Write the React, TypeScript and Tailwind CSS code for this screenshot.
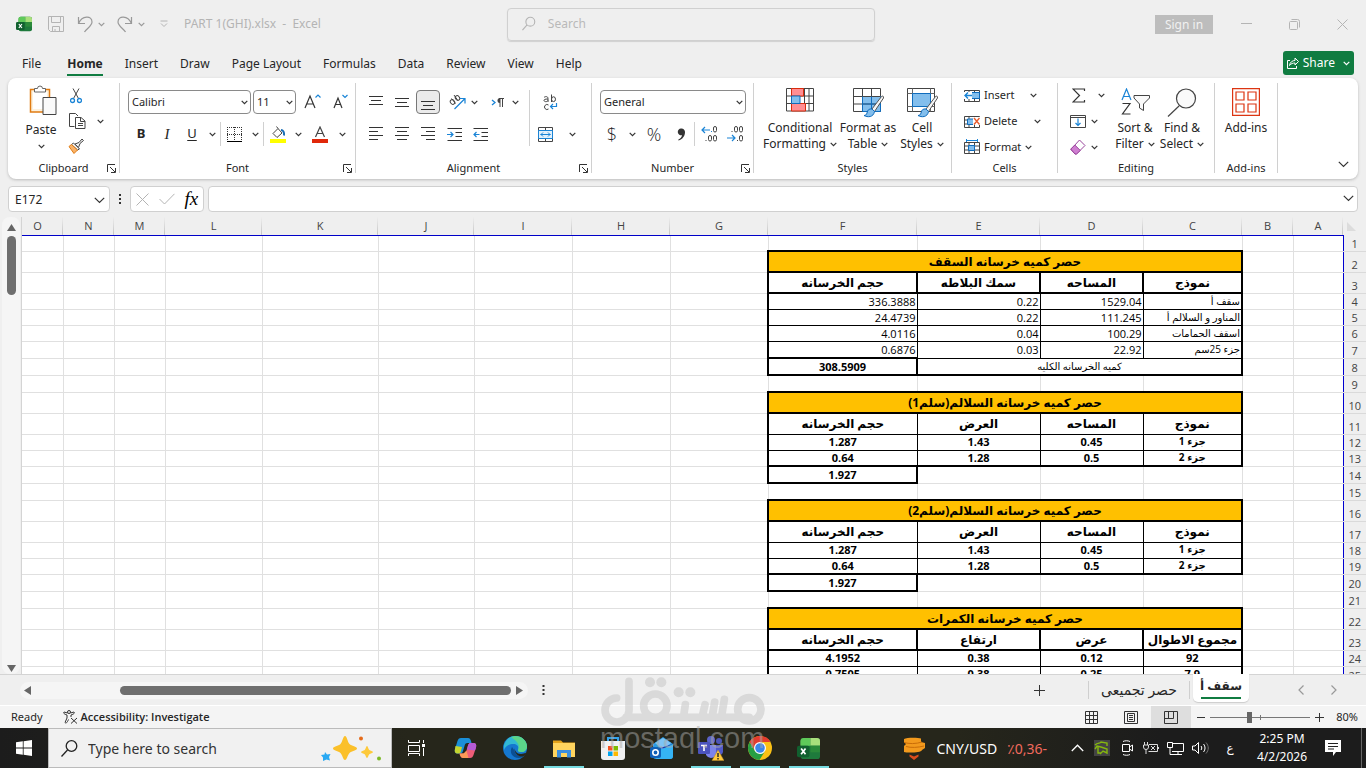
import React from 'react';

const COLUMNS = [
    { name: 'O', width: 'w-[51px]' },
    { name: 'N', width: 'w-[51px]' },
    { name: 'M', width: 'w-[51px]' },
    { name: 'L', width: 'w-[97px]' },
    { name: 'K', width: 'w-[116px]' },
    { name: 'J', width: 'w-[96px]' },
    { name: 'I', width: 'w-[98px]' },
    { name: 'H', width: 'w-[98px]' },
    { name: 'G', width: 'w-[98px]' },
    { name: 'F', width: 'w-[149px]' },
    { name: 'E', width: 'w-[123px]' },
    { name: 'D', width: 'w-[103px]' },
    { name: 'C', width: 'w-[99px]' },
    { name: 'B', width: 'w-[51px]' },
    { name: 'A', width: 'w-[50px]' },
];

type RowKind = 'blank' | 'title' | 'headHeavy' | 'head' | 'numbers' | 'grand' | 'body' | 'bodyLast' | 'total';

interface SheetRow {
    kind: RowKind;
    height: string;
    // values run from column F to column C
    values?: string[];
}

const TALL = 'h-[21px]';
const MID = 'h-[17px]';
const LOW = 'h-[16px]';

const ROWS: SheetRow[] = [
    { kind: 'blank', height: LOW },
    { kind: 'title', height: TALL, values: ['حصر كميه خرسانه السقف'] },
    { kind: 'headHeavy', height: TALL, values: ['حجم الخرسانه', 'سمك البلاطه', 'المساحه', 'نموذج'] },
    { kind: 'numbers', height: LOW, values: ['336.3888', '0.22', '1529.04', 'سقف أ'] },
    { kind: 'numbers', height: LOW, values: ['24.4739', '0.22', '111.245', 'المناور و السلالم أ'] },
    { kind: 'numbers', height: LOW, values: ['4.0116', '0.04', '100.29', 'اسقف الحمامات'] },
    { kind: 'numbers', height: MID, values: ['0.6876', '0.03', '22.92', 'جزء 25سم'] },
    { kind: 'grand', height: MID, values: ['308.5909', 'كميه الخرسانه الكليه'] },
    { kind: 'blank', height: MID },
    { kind: 'title', height: TALL, values: ['حصر كميه خرسانه السلالم(سلم1)'] },
    { kind: 'head', height: TALL, values: ['حجم الخرسانه', 'العرض', 'المساحه', 'نموذج'] },
    { kind: 'body', height: LOW, values: ['1.287', '1.43', '0.45', 'جزء 1'] },
    { kind: 'bodyLast', height: LOW, values: ['0.64', '1.28', '0.5', 'جزء 2'] },
    { kind: 'total', height: MID, values: ['1.927'] },
    { kind: 'blank', height: MID },
    { kind: 'title', height: TALL, values: ['حصر كميه خرسانه السلالم(سلم2)'] },
    { kind: 'head', height: TALL, values: ['حجم الخرسانه', 'العرض', 'المساحه', 'نموذج'] },
    { kind: 'body', height: LOW, values: ['1.287', '1.43', '0.45', 'جزء 1'] },
    { kind: 'bodyLast', height: LOW, values: ['0.64', '1.28', '0.5', 'جزء 2'] },
    { kind: 'total', height: MID, values: ['1.927'] },
    { kind: 'blank', height: MID },
    { kind: 'title', height: TALL, values: ['حصر كميه خرسانه الكمرات'] },
    { kind: 'headHeavy', height: TALL, values: ['حجم الخرسانه', 'ارتفاع', 'عرض', 'مجموع الاطوال'] },
    { kind: 'body', height: LOW, values: ['4.1952', '0.38', '0.12', '92'] },
    { kind: 'body', height: MID, values: ['0.7505', '0.38', '0.25', '7.9'] },
];

const CELL_STYLE: Record<RowKind, string> = {
    blank: '',
    title: 'border-2 border-black bg-[#ffc000] text-center text-[12px] leading-[17px] font-bold',
    headHeavy: 'border-2 border-black text-center text-[12px] leading-[17px] font-bold',
    head: 'border border-black text-center text-[12px] leading-[17px] font-bold',
    numbers: 'border border-black px-px text-right leading-[13px]',
    grand: 'border border-b-2 border-black text-center leading-[13px]',
    body: 'border border-black text-center align-top leading-[13px] font-bold',
    bodyLast: 'border border-b-2 border-black text-center align-top leading-[13px] font-bold',
    total: 'border-2 border-black text-center text-[11px] leading-[13px] font-bold',
};

const isArabic = (text: string) => /[\u0600-\u06ff]/.test(text);

const Chevron = ({ className = 'text-[#333]' }: { className?: string }) => (
    <svg width="7" height="5" viewBox="0 0 7 5" className={`shrink-0 ${className}`} fill="none" stroke="currentColor" strokeWidth="1.2">
        <path d="M.7.8 3.5 3.6 6.3.8" />
    </svg>
);

const BigChevron = () => (
    <svg width="11" height="7" viewBox="0 0 11 7" fill="none" stroke="#333" strokeWidth="1.2">
        <path d="M.8.8 5.5 5.5 10.2.8" />
    </svg>
);

const Launcher = () => (
    <svg width="9" height="9" viewBox="0 0 9 9" fill="none" stroke="#333">
        <path d="M.5 8V.5H8M3 3l5 5M8.5 4v4.5H4" />
    </svg>
);

interface ToolProps {
    label: string;
    width?: string;
    className?: string;
    children: React.ReactNode;
}

const Tool = ({ label, width = 'w-[26px]', className = '', children }: ToolProps) => (
    <button type="button" aria-label={label} className={`flex h-6 shrink-0 items-center justify-center ${width} ${className}`}>
        {children}
    </button>
);

const Rule = () => <span className="h-6 w-px shrink-0 bg-[#d0d0d0]" />;

interface GroupProps {
    title: string;
    width: string;
    launcher?: boolean;
    children: React.ReactNode;
}

const Group = ({ title, width, launcher, children }: GroupProps) => (
    <section className={`relative flex h-[90px] shrink-0 flex-col border-r border-[#d0d0d0] ${width}`}>
        <div className="h-[78px] shrink-0 pt-[7px]">{children}</div>
        <div className="text-center text-[11px] leading-[14px]">{title}</div>
        {launcher && (
            <button type="button" aria-label={`${title} settings`} className="absolute right-[3px] bottom-0">
                <Launcher />
            </button>
        )}
    </section>
);

interface PickerProps {
    label: string;
    value: string;
    width: string;
}

const Picker = ({ label, value, width }: PickerProps) => (
    <div className={`relative h-6 shrink-0 ${width}`}>
        <select aria-label={label} className="block h-6 w-full appearance-none rounded-[4px] border border-[#8a8a8a] bg-white px-[3px] text-[11px] leading-4">
            <option>{value}</option>
        </select>
        <span className="pointer-events-none absolute top-[10px] right-[3px] flex">
            <Chevron />
        </span>
    </div>
);

const Lines = ({ rows }: { rows: number[][] }) => (
    <svg width="14" height="16" viewBox="0 0 14 16" stroke="#333">
        {rows.map(([y, x1, x2]) => (
            <path key={y} d={`M${x1} ${y}.5H${x2}`} />
        ))}
    </svg>
);

const IndentIcon = ({ outward }: { outward?: boolean }) => (
    <svg width="15" height="14" viewBox="0 0 15 14" fill="none" stroke="#333">
        <path d="M.5 1.5H15M8.5 5.5H15M8.5 9.5H15M.5 13.5H15" />
        <path stroke="#1a84d6" strokeWidth="1.2" d={outward ? 'M6.5 7.5H1M3.5 5 1 7.5 3.5 10' : 'M0 7.5h5.5M3.5 5 6 7.5 3.5 10'} />
    </svg>
);

const BigLabel = ({ lines, arrow }: { lines: string[]; arrow?: boolean }) => (
    <span className="flex flex-col items-center text-[12px] leading-4 whitespace-nowrap">
        {lines.map((line, i) => (
            <span key={line} className="flex items-center gap-1">
                {line}
                {arrow && i === lines.length - 1 && <Chevron />}
            </span>
        ))}
    </span>
);

const BigTool = ({ lines, arrow, width, children }: { lines: string[]; arrow?: boolean; width: string; children: React.ReactNode }) => (
    <button type="button" className={`-mt-[2px] flex shrink-0 flex-col items-center ${width}`}>
        <span className="flex h-8 items-start justify-center">{children}</span>
        <BigLabel lines={lines} arrow={arrow} />
    </button>
);

const Brush = () => (
    <g>
        <path d="M28.500 8.500 19 21l2.500 2.500L30.500 10c.6-1.600-1-2.500-2-1.500Z" fill="#f5f5f5" stroke="#555" />
        <path d="M19 21c-3-.5-4.500 1-5 4-.3 1.600-1.500 2.500-3 2.500 3.500 2 9.500 2 10.500-4Z" fill="#83beec" stroke="#0f6cbd" />
    </g>
);

const FormatTableIcon = () => (
    <svg width="31" height="30" viewBox="0 0 31 30" fill="none">
        <path d="M.5.5h27v23H.5Z" fill="#fff" stroke="#444" />
        <path d="M10 8h17.5v15.5H10Z" fill="#83beec" />
        <path d="M.5 8.5h27M.5 16h27M9.500.5v23M18.500.5v23" stroke="#444" />
        <path d="M9.500 8.500V23.500H27.500V8.500M18.500 8.500v15M9.500 16h18" stroke="#0f6cbd" />
        <Brush />
    </svg>
);

const CellStylesIcon = () => (
    <svg width="31" height="30" viewBox="0 0 31 30" fill="none">
        <path d="M.5.5h27v23H.5Z" fill="#fff" stroke="#444" />
        <path d="M.5 5.5h27M.5 18.5h27M5.500.5v23M23.500.5v23" stroke="#666" />
        <path d="M5.500 5.500h18v13h-18Z" fill="#83beec" stroke="#0f6cbd" />
        <Brush />
    </svg>
);

const CellRowIcon = ({ kind }: { kind: 'insert' | 'delete' | 'format' }) => (
    <svg width="16" height="16" viewBox="0 0 16 16" fill="none">
        <path d="M.5 3.5h15v11H.5ZM.5 7h15M.5 11h15M5 3v12M10.5 3v12" stroke="#444" />
        {kind === 'insert' && (
            <>
                <path d="M6 5.5h9.5v6H6Z" fill="#83beec" stroke="#0f6cbd" />
                <path d="M0 5h8v7H0Z" fill="#fff" />
                <path d="M8 8.5H1M4 5.5l-3 3 3 3" stroke="#1a84d6" strokeWidth="1.4" />
            </>
        )}
        {kind === 'delete' && (
            <>
                <path d="M3.5 6h6v5.5h-6Z" fill="#83beec" stroke="#0f6cbd" />
                <path d="M9 4h7v8H9Z" fill="#fff" />
                <path d="m10 5 5.5 6.5M15.5 5 10 11.5" stroke="#e8592b" strokeWidth="1.4" />
            </>
        )}
        {kind === 'format' && (
            <>
                <path d="M0 0h16v3H0Z" fill="#fff" />
                <path d="M4.5 6.5h6v5h-6Z" fill="#83beec" stroke="#0f6cbd" />
                <path d="M2.5 1.5h11M2.500 0v3M13.500 0v3" stroke="#1a84d6" />
            </>
        )}
    </svg>
);

const ExcelIcon = ({ size }: { size: number }) => (
    <svg width={size} height={size} viewBox="0 0 24 24">
        <rect x="4" y="1" width="20" height="22" rx="3" fill="#1e7a3c" />
        <path d="M7 1h7v8H3.500V4.500A3.500 3.500 0 0 1 7 1Z" fill="#5fc95a" />
        <path d="M14 1h7a3 3 0 0 1 3 3v5H14Z" fill="#a9e07c" />
        <path d="M14 9h10v7H14Z" fill="#2b8a3a" />
        <rect y="9" width="13" height="12" rx="2" fill="#11602f" />
        <path d="m4.300 12 4.600 6M8.900 12l-4.600 6" stroke="#fff" strokeWidth="1.8" />
    </svg>
);

const TitleBar = () => (
    <header className="grid h-12 shrink-0 grid-cols-[507fr_368fr_491fr] items-center text-[12px] text-[#b4b4b4]">
        <div className="flex items-center pl-4">
            <ExcelIcon size={16} />
            <button type="button" aria-label="Save" className="ml-4">
                <svg width="16" height="16" viewBox="0 0 16 16" fill="none" stroke="#b4b4b4">
                    <path d="M.5.5h15v15h-13l-2-2ZM3.500.5v6h9v-6M4.500 15.500v-5h7v5M7 13v2.500" />
                </svg>
            </button>
            <button type="button" aria-label="Undo" className="ml-[13px] flex w-7 items-center justify-between">
                <svg width="17" height="17" viewBox="0 0 17 17" fill="none" stroke="#999" strokeWidth="1.2">
                    <path d="M1.500 1v6.500H8M1.800 7C5-.5 15-1 15 6 15 10 9 13 7.500 16" />
                </svg>
                <Chevron className="text-[#999]" />
            </button>
            <button type="button" aria-label="Redo" className="ml-3 flex w-7 items-center justify-between">
                <svg width="17" height="17" viewBox="0 0 17 17" fill="none" stroke="#999" strokeWidth="1.2">
                    <path d="M14.500 1v6.500H8M14.200 7C11-.5 1-1 1 6 1 10 7 13 8.500 16" />
                </svg>
                <Chevron className="text-[#999]" />
            </button>
            <button type="button" aria-label="Customize Quick Access Toolbar" className="ml-[15px]">
                <svg width="8" height="8" viewBox="0 0 8 8" fill="none" stroke="#b4b4b4">
                    <path d="M.5 1h7M1 3.500l3 3 3-3" />
                </svg>
            </button>
            <span className="ml-4 whitespace-pre">PART 1(GHI).xlsx  -  Excel</span>
        </div>
        <label className="flex h-[33px] items-center gap-3 rounded-[4px] border border-[#d0d0d0] px-[14px] shadow-[0_1px_1px_#d0d0d0]">
            <svg width="15" height="16" viewBox="0 0 15 16" fill="none" stroke="#b4b4b4" strokeWidth="1.2">
                <circle cx="9" cy="5.5" r="4.8" />
                <path d="M5.500 9 .5 14.500" />
            </svg>
            <input type="text" aria-label="Search" placeholder="Search" className="w-full bg-transparent text-[12px] outline-none placeholder:text-[#b9b9b9]" />
        </label>
        <div className="flex items-center justify-end pr-[18px]">
            <button type="button" className="h-[19px] w-[58px] bg-[#bdbdbd] text-[12px] leading-[19px] text-[#f1f1f1]">Sign in</button>
            <button type="button" aria-label="Minimize" className="ml-7">
                <svg width="11" height="12" viewBox="0 0 11 12" stroke="#b4b4b4"><path d="M0 5.500h11" /></svg>
            </button>
            <button type="button" aria-label="Restore" className="ml-[37px]">
                <svg width="11" height="11" viewBox="0 0 11 11" fill="none" stroke="#b4b4b4">
                    <rect x=".5" y="2.5" width="8" height="8" rx="1" />
                    <path d="M2.500.5h6a2 2 0 0 1 2 2v6" />
                </svg>
            </button>
            <button type="button" aria-label="Close" className="ml-[37px]">
                <svg width="11" height="11" viewBox="0 0 11 11" stroke="#b4b4b4"><path d="m.5.5 10 10M10.500.5l-10 10" /></svg>
            </button>
        </div>
    </header>
);

const RIBBON_TABS = ['File', 'Home', 'Insert', 'Draw', 'Page Layout', 'Formulas', 'Data', 'Review', 'View', 'Help'];

const RibbonTabs = () => (
    <nav className="flex h-[30px] shrink-0 items-center justify-between pr-3 pl-[11px] text-[12px]">
        <div className="flex">
            {RIBBON_TABS.map((tab) => (
                <button
                    key={tab}
                    type="button"
                    className={tab === 'Home' ? 'mr-[11px] ml-[15px] border-b-2 border-[#107c41] pt-[3px] leading-[20px] font-bold' : 'px-[11px] pt-px leading-[22px]'}
                >
                    {tab}
                </button>
            ))}
        </div>
        <button type="button" className="flex h-6 items-center gap-1 rounded-[3px] bg-[#107c41] px-1 text-white">
            <svg width="12" height="12" viewBox="0 0 12 12" fill="none" stroke="#fff">
                <path d="M3 3.500H.5v8h9V9M2.500 8.500c.5-3.500 3-5 5.500-5V1l3.500 3.500L8 8V6C6 6 4 6.500 2.500 8.500Z" />
            </svg>
            <span>Share</span>
            <Chevron className="ml-1 text-white" />
        </button>
    </nav>
);

const ClipboardGroup = () => (
    <Group title="Clipboard" width="w-[112px]" launcher>
        <div className="-mt-[6px] flex pl-[14px]">
            <button type="button" className="flex w-[38px] flex-col items-center">
                <svg width="28" height="34" viewBox="0 0 28 34" fill="none" className="ml-1">
                    <path d="M1.500 5.500h19V28h-19Z" fill="#fdf1dc" stroke="#e07b12" strokeWidth="1.5" />
                    <path d="M4 8h14v17H4Z" fill="#fff" />
                    <path d="M5.500 8V4.500H8.500a2.500 2.500 0 0 1 5 0h3V8Z" fill="#fff" stroke="#666" />
                    <path d="M14 13.500h13v17H14Z" fill="#fafafa" stroke="#444" />
                </svg>
                <span className="pt-1 text-[12px] leading-4">Paste</span>
                <span className="flex h-4 items-center"><Chevron /></span>
            </button>
            <div className="ml-1 flex flex-col gap-[1px]">
                <Tool label="Cut" width="w-6">
                    <svg width="12" height="16" viewBox="0 0 12 16" fill="none" stroke="#444">
                        <path d="m3 .5 5.500 10M9 .5l-5.500 10" />
                        <circle cx="2.5" cy="12.5" r="2" stroke="#1a84d6" strokeWidth="1.3" />
                        <circle cx="9.5" cy="12.5" r="2" stroke="#1a84d6" strokeWidth="1.3" />
                    </svg>
                </Tool>
                <Tool label="Copy" width="w-11" className="gap-[11px]">
                    <svg width="17" height="16" viewBox="0 0 17 16" fill="none" stroke="#444">
                        <path d="M5.500 13.500h-5V.5h6L9 3M6.500 4.500h5.500l4 3.500v7.500H6.500ZM11.500 4.500v4H16M9 10.500h5M9 12.500h5" />
                    </svg>
                    <Chevron />
                </Tool>
                <Tool label="Format Painter" width="w-6">
                    <svg width="16" height="16" viewBox="0 0 16 16" fill="none">
                        <path d="m7 6 4-1.500L14 1l1.500 1.500L12 5.500 10.500 9.500Z" fill="#f5f5f5" stroke="#444" />
                        <path d="m5.500 5 6 6-2 1-6-5.500Z" fill="#fff" stroke="#444" />
                        <path d="m3.500 6.500 6 5.500L6 15.500 1 8.500Z" fill="#f8b26a" stroke="#e07b12" />
                    </svg>
                </Tool>
            </div>
        </div>
    </Group>
);

const FontGroup = () => (
    <Group title="Font" width="w-[236px]" launcher>
        <div className="flex gap-[2px] pl-2">
            <Picker label="Font" value="Calibri" width="w-[123px]" />
            <Picker label="Font size" value="11" width="w-[43px]" />
            <Tool label="Increase font size" width="w-7">
                <svg width="17" height="18" viewBox="0 0 17 18" fill="none" stroke="#333" strokeWidth="1.2">
                    <path d="M1 15 6 3l5 12M2.700 11h6.600" />
                    <path stroke="#1a84d6" d="m11.500 4.500 2.500-2.500 2.500 2.500" />
                </svg>
            </Tool>
            <Tool label="Decrease font size" width="w-6">
                <svg width="15" height="18" viewBox="0 0 15 18" fill="none" stroke="#333" strokeWidth="1.2">
                    <path d="m1 15 4-10 4 10M2.500 11.500h5" />
                    <path stroke="#1a84d6" d="m9.500 2 2.500 2.500L14.500 2" />
                </svg>
            </Tool>
        </div>
        <div className="mt-2 flex items-center pl-2">
            <Tool label="Bold" className="text-[13px] font-bold">B</Tool>
            <Tool label="Italic" className="font-['Liberation_Serif'] text-[15px] italic">I</Tool>
            <Tool label="Underline" width="w-6" className="text-[13px] underline underline-offset-2">U</Tool>
            <Tool label="Underline options" width="w-4"><Chevron /></Tool>
            <Rule />
            <Tool label="Borders">
                <svg width="15" height="15" viewBox="0 0 15 15" fill="none" stroke="#333">
                    <path strokeDasharray="1 1" d="M.5 0v14M7.500 0v14M14.500 0v14M0 .5h15M0 7.500h15" />
                    <path d="M0 14.500h15" stroke="#000" />
                </svg>
            </Tool>
            <Tool label="Borders options" width="w-4"><Chevron /></Tool>
            <Rule />
            <Tool label="Fill colour" width="w-7">
                <svg width="16" height="17" viewBox="0 0 16 17" fill="none" stroke="#444">
                    <path d="m3 7.500 5-5L12 7l-5 4.500ZM8 2.500 6.500.5" />
                    <path d="M11 4c2 0 3.500 2 3 5.500" stroke="#1a6fb5" strokeWidth="2" />
                    <path d="M0 15h16" stroke="#ff0" strokeWidth="4" />
                </svg>
            </Tool>
            <Tool label="Fill colour options" width="w-3"><Chevron /></Tool>
            <Tool label="Font colour" width="w-8">
                <svg width="16" height="17" viewBox="0 0 16 17" fill="none" stroke="#444" strokeWidth="1.2">
                    <path d="M3.500 11 8 1l4.500 10M5 7.500h6" />
                    <path d="M0 15h16" stroke="#e0280a" strokeWidth="4" />
                </svg>
            </Tool>
            <Tool label="Font colour options" width="w-3"><Chevron /></Tool>
        </div>
    </Group>
);

const AlignmentGroup = () => (
    <Group title="Alignment" width="w-[236px]" launcher>
        <div className="flex pl-[7px]">
            <div className="flex w-[167px] flex-col gap-2 border-r border-[#d0d0d0]">
                <div className="flex">
                    <Tool label="Top align"><Lines rows={[[2, 0, 14], [6, 2, 12], [10, 0, 14]]} /></Tool>
                    <Tool label="Middle align"><Lines rows={[[4, 0, 14], [8, 2, 12], [12, 0, 14]]} /></Tool>
                    <Tool label="Bottom align" width="w-6" className="mx-px rounded-[4px] border border-[#777] bg-[#ebebeb]">
                        <Lines rows={[[7, 0, 14], [11, 2, 12], [15, 0, 14]]} />
                    </Tool>
                    <Tool label="Orientation" width="w-11" className="gap-[5px]">
                        <svg width="17" height="16" viewBox="0 0 17 16" fill="none" stroke="#444">
                            <ellipse cx="3.5" cy="8" rx="2" ry="2.5" transform="rotate(-40 3.5 8)" />
                            <path d="m2.500 4.500 4 5" />
                            <ellipse cx="8.5" cy="4" rx="2" ry="2.5" transform="rotate(-40 8.5 4)" />
                            <path d="M5 1l3.500 5" />
                            <path stroke="#1a84d6" strokeWidth="1.2" d="M5.500 15 15.500 5M11 4.500h5V9.500" />
                        </svg>
                        <Chevron />
                    </Tool>
                    <Tool label="Text direction" width="w-10" className="gap-2">
                        <svg width="13" height="11" viewBox="0 0 13 11" fill="none">
                            <path d="m1 3 3 2.500L1 8" stroke="#1a84d6" strokeWidth="1.3" />
                            <path d="M9 10V1.500M11.500 10V1.500M8 1.500h5" stroke="#444" />
                            <path d="M9 1a2.300 2.300 0 0 0 0 5Z" fill="#444" />
                        </svg>
                        <Chevron />
                    </Tool>
                </div>
                <div className="flex">
                    <Tool label="Align left"><Lines rows={[[1, 0, 14], [5, 0, 9], [9, 0, 14], [13, 0, 9]]} /></Tool>
                    <Tool label="Centre"><Lines rows={[[1, 0, 14], [5, 2, 12], [9, 0, 14], [13, 2, 12]]} /></Tool>
                    <Tool label="Align right"><Lines rows={[[1, 0, 14], [5, 5, 14], [9, 0, 14], [13, 5, 14]]} /></Tool>
                    <Tool label="Increase indent"><IndentIcon /></Tool>
                    <Tool label="Decrease indent"><IndentIcon outward /></Tool>
                </div>
            </div>
            <div className="flex flex-col gap-2 pl-1">
                <Tool label="Wrap text" width="w-[32px]">
                    <svg width="15" height="17" viewBox="0 0 15 17" fill="none" stroke="#444">
                        <path d="M1 3.500C2 2.300 5 2 5 4.500V8M5 5C2 5 1 5.500 1 6.500S3.500 8.500 5 6.500" />
                        <path d="M8.500.5V8M5.500 11A2.500 2.500 0 1 0 5.500 15" />
                        <ellipse cx="10.5" cy="5.2" rx="2" ry="2.4" />
                        <path stroke="#1a84d6" strokeWidth="1.2" d="M13.500 9v3.500H7.500M10 10l-2.500 2.500L10 15" />
                    </svg>
                </Tool>
                <Tool label="Merge and centre" width="w-[46px]" className="gap-4">
                    <svg width="15" height="15" viewBox="0 0 15 15" fill="none" stroke="#444">
                        <path d="M.5.5h14v14H.5ZM7.500.5v14" />
                        <path d="M.5 3.500h14v8H.5Z" fill="#e1f0fb" stroke="#1a84d6" />
                        <path stroke="#1a84d6" d="M2.500 7.500h10M5 5.500l-2 2 2 2M10 5.500l2 2-2 2" />
                    </svg>
                    <Chevron />
                </Tool>
            </div>
        </div>
    </Group>
);

const DecimalIcon = ({ more }: { more?: boolean }) => (
    <svg width="17" height="16" viewBox="0 0 17 16" fill="none" stroke="#444">
        {more ? (
            <>
                <rect x="12.5" y=".5" width="3" height="5.5" rx="1.5" />
                <path stroke="#1a84d6" strokeWidth="1.2" d="M9 4H1M4 1 1 4l3 3M10 5.500h1" />
                <rect x="7.5" y="9.5" width="3" height="5.5" rx="1.5" />
                <rect x="12.5" y="9.5" width="3" height="5.5" rx="1.5" />
                <path d="M4.500 14.500h1" />
            </>
        ) : (
            <>
                <rect x="7.5" y=".5" width="3" height="5.5" rx="1.5" />
                <rect x="12.5" y=".5" width="3" height="5.5" rx="1.5" />
                <path stroke="#1a84d6" strokeWidth="1.2" d="M0 12h8M5 9l3 3-3 3" />
                <rect x="12.5" y="9.5" width="3" height="5.5" rx="1.5" />
                <path d="M4.500 5.500h1M10 14.500h1" />
            </>
        )}
    </svg>
);

const NumberGroup = () => (
    <Group title="Number" width="w-[162px]" launcher>
        <div className="pl-2">
            <Picker label="Number format" value="General" width="w-[146px]" />
        </div>
        <div className="mt-2 flex items-center pl-2">
            <Tool label="Accounting format" width="w-6" className="font-['Open_Sans'] text-[18px] font-light">$</Tool>
            <Tool label="Accounting options" width="w-4"><Chevron /></Tool>
            <Tool label="Percent style" width="w-7" className="font-['Open_Sans'] text-[18px] font-light">%</Tool>
            <Tool label="Comma style">
                <svg width="9" height="13" viewBox="0 0 9 13"><path d="M4 .5a3.500 3.500 0 0 1 4 3.800C8 8 5.500 11.500 1.500 12.500l-.3-.8C3.500 10.500 4.800 9 5 7.200A3.400 3.400 0 1 1 4 .5Z" fill="#333" /></svg>
            </Tool>
            <Rule />
            <Tool label="Increase decimal" width="w-7"><DecimalIcon more /></Tool>
            <Tool label="Decrease decimal" width="w-6"><DecimalIcon /></Tool>
        </div>
    </Group>
);

const StylesGroup = () => (
    <Group title="Styles" width="w-[198px]">
        <div className="flex pl-[6px]">
            <BigTool lines={['Conditional', 'Formatting']} arrow width="w-20">
                <svg width="28" height="24" viewBox="0 0 28 24" fill="none">
                    <path d="M.5.5h27v22.500H.5ZM.5 8h27M.5 15.500h27M5.500.5V23M18.500.5V23M23 .5V23" stroke="#444" />
                    <path d="M5.500.5h12V8h-12ZM5.500 15.500h14V23h-14Z" fill="#ff8e93" stroke="#d92c0d" />
                    <path d="M5.500 8h8.500v7.500H5.500Z" fill="#83beec" stroke="#0f6cbd" />
                </svg>
            </BigTool>
            <BigTool lines={['Format as', 'Table']} arrow width="w-14"><FormatTableIcon /></BigTool>
            <BigTool lines={['Cell', 'Styles']} arrow width="w-[52px]"><CellStylesIcon /></BigTool>
        </div>
    </Group>
);

const CellsGroup = () => (
    <Group title="Cells" width="w-[106px]">
        <div className="-mt-[7px] flex flex-col gap-[2px] pl-3 text-[11px]">
            <button type="button" className="flex h-6 items-center gap-1">
                <CellRowIcon kind="insert" /><span className="w-[42px] text-left">Insert</span><Chevron />
            </button>
            <button type="button" className="flex h-6 items-center gap-1">
                <CellRowIcon kind="delete" /><span className="w-[46px] text-left">Delete</span><Chevron />
            </button>
            <button type="button" className="flex h-6 items-center gap-1">
                <CellRowIcon kind="format" /><span>Format</span><Chevron />
            </button>
        </div>
    </Group>
);

const EditingGroup = () => (
    <Group title="Editing" width="w-[157px]">
        <div className="flex pl-3">
            <div className="-mt-[7px] mr-[5px] flex flex-col gap-[2px]">
                <Tool label="AutoSum" width="w-9" className="gap-3">
                    <svg width="14" height="15" viewBox="0 0 14 15" fill="none" stroke="#333" strokeWidth="1.2"><path d="M12.500 3V1H1l6.500 6.500L1 14h11.500v-2" /></svg>
                    <Chevron />
                </Tool>
                <Tool label="Fill" width="w-7" className="gap-[5px]">
                    <svg width="16" height="15" viewBox="0 0 16 15" fill="none" stroke="#444">
                        <path d="M.5 1.500h15v12H.5ZM.5 3.500h15" />
                        <path stroke="#1a84d6" strokeWidth="1.2" d="M8 4.500V12M5.500 9 8 11.500 10.500 9" />
                    </svg>
                    <Chevron />
                </Tool>
                <Tool label="Clear" width="w-7" className="gap-[5px]">
                    <svg width="16" height="16" viewBox="0 0 16 16" fill="none" stroke="#99449c">
                        <path d="M9.500 1 15 6.500 6.500 15H5L.8 10.500Z" fill="#fff" />
                        <path d="m.8 10 4-4 5.500 5.500L6.500 15H5Z" fill="#cf7fd1" />
                    </svg>
                    <Chevron />
                </Tool>
            </div>
            <BigTool lines={['Sort &', 'Filter']} arrow width="w-12">
                <svg width="29" height="27" viewBox="0 0 29 27" fill="none">
                    <path d="M1 12 5.500 1 10 12M2.500 8.500h6" stroke="#1a84d6" strokeWidth="1.2" />
                    <path d="M1.500 15.500H9L1.500 26H9.500" stroke="#333" strokeWidth="1.2" />
                    <path d="M13 7.500h15.500v2.500l-6 6v6.500l-4-2.500V16L13 10Z" fill="#fafafa" stroke="#444" />
                </svg>
            </BigTool>
            <BigTool lines={['Find &', 'Select']} arrow width="w-[46px]">
                <svg width="30" height="29" viewBox="0 0 30 29" fill="none" stroke="#444" strokeWidth="1.2">
                    <circle cx="19" cy="10.5" r="9.5" fill="#fafafa" />
                    <path d="M12 18 1 28.500" />
                </svg>
            </BigTool>
        </div>
    </Group>
);

const Ribbon = () => (
    <div className="mx-2 flex h-[101px] shrink-0 rounded-lg bg-white pt-[5px] shadow-[0_1px_3px_#bbb]">
        <ClipboardGroup />
        <FontGroup />
        <AlignmentGroup />
        <NumberGroup />
        <StylesGroup />
        <CellsGroup />
        <EditingGroup />
        <Group title="Add-ins" width="w-[63px]">
            <BigTool lines={['Add-ins']} width="w-full">
                <svg width="28" height="28" viewBox="0 0 28 28" fill="none" stroke="#dc3512" strokeWidth="1.2">
                    <path d="M.6.6h26.800v26.800H.6ZM4 4h8v8H4ZM16 4h8v8h-8ZM4 16h8v8H4ZM16 16h8v8h-8Z" />
                </svg>
            </BigTool>
        </Group>
        <button type="button" aria-label="Collapse ribbon" className="mr-[9px] mb-[11px] ml-auto self-end"><BigChevron /></button>
    </div>
);

const FormulaBar = () => (
    <div className="flex h-[38px] shrink-0 items-center px-2 pt-[2px]">
        <div className="relative h-[26px] w-[102px]">
            <input aria-label="Name box" defaultValue="E172" className="block h-[26px] w-full rounded-[4px] border border-[#d0d0d0] bg-white px-[6px] text-[12px]" />
            <span className="pointer-events-none absolute top-[11px] right-[5px] flex"><BigChevron /></span>
        </div>
        <svg width="20" height="12" viewBox="0 0 20 12" fill="#333">
            <path d="M9 1h2v2H9ZM9 5h2v2H9ZM9 9h2v2H9Z" />
        </svg>
        <div className="flex h-[26px] w-[74px] items-center justify-around rounded-[4px] border border-[#d0d0d0] bg-white">
            <button type="button" aria-label="Cancel">
                <svg width="13" height="13" viewBox="0 0 13 13" stroke="#b4b4b4"><path d="m.5.5 12 12M12.500.5l-12 12" /></svg>
            </button>
            <button type="button" aria-label="Enter">
                <svg width="16" height="12" viewBox="0 0 16 12" fill="none" stroke="#b4b4b4"><path d="m.5 6 5 5L15.500.8" /></svg>
            </button>
            <button type="button" className="font-['Liberation_Serif'] text-[19px] leading-5 text-black italic">fx</button>
        </div>
        <div className="relative ml-1 h-[26px] flex-1">
            <input aria-label="Formula" className="block h-[26px] w-full rounded-[4px] border border-[#d0d0d0] bg-white px-2 text-[12px]" />
            <span className="pointer-events-none absolute top-[9px] right-[4px] flex"><BigChevron /></span>
        </div>
    </div>
);

const EmptyCells = ({ names }: { names: string[] }) => (
    <>
        {names.map((name) => (
            <td key={name} className={`border-r border-b p-0 ${name === 'A' ? 'border-r-[#0000d0] border-b-[#e0e0e0]' : 'border-[#e0e0e0]'}`} />
        ))}
    </>
);

const DataCells = ({ row }: { row: SheetRow }) => {
    const { kind, values = [] } = row;
    const base = CELL_STYLE[kind];

    if (kind === 'blank') {
        return <EmptyCells names={['F', 'E', 'D', 'C']} />;
    }
    if (kind === 'title') {
        return <td colSpan={4} dir="rtl" className={base}>{values[0]}</td>;
    }
    if (kind === 'grand') {
        return (
            <>
                <td className="border-2 border-black text-center text-[11px] leading-[13px] font-bold">{values[0]}</td>
                <td colSpan={3} dir="rtl" className={`border-r-2 text-[10px] ${base}`}>{values[1]}</td>
            </>
        );
    }
    if (kind === 'total') {
        return (
            <>
                <td className={base}>{values[0]}</td>
                <EmptyCells names={['E', 'D', 'C']} />
            </>
        );
    }

    const isHead = kind === 'head' || kind === 'headHeavy';
    return (
        <>
            {values.map((value, i) => (
                <td
                    key={i}
                    dir={isArabic(value) ? 'rtl' : 'ltr'}
                    className={`${base} ${i === 0 ? 'border-l-2' : ''} ${i === 3 ? 'border-r-2' : ''} ${isHead ? '' : isArabic(value) ? 'text-[10px]' : 'text-[11px]'}`}
                >
                    {value}
                </td>
            ))}
        </>
    );
};

const Sheet = () => (
    <table className="w-[1354px] shrink-0 table-fixed border-collapse self-start bg-white font-['Open_Sans','DejaVu_Sans',sans-serif] whitespace-nowrap text-black">
        <thead>
            <tr className="h-[18px] bg-[#efefef] text-[11px] leading-[13px] text-[#444]">
                {COLUMNS.map(({ name, width }) => (
                    <th
                        key={name}
                        scope="col"
                        className={`border-b border-b-[#0000c8] bg-[linear-gradient(to_top,#c4c4c4,#efefef)] bg-[length:1px_100%] bg-right bg-no-repeat p-0 font-normal ${width}`}
                    >
                        {name}
                    </th>
                ))}
                <th className="w-[23px] p-0">
                    <svg width="9" height="9" viewBox="0 0 9 9" className="ml-1"><path d="M0 0v9h9Z" fill="#dcdcdc" /></svg>
                </th>
            </tr>
        </thead>
        <tbody>
            {ROWS.map((row, i) => (
                <tr key={i} className={row.height}>
                    <EmptyCells names={['O', 'N', 'M', 'L', 'K', 'J', 'I', 'H', 'G']} />
                    <DataCells row={row} />
                    <EmptyCells names={['B', 'A']} />
                    <th scope="row" className="border-b border-[#dadada] bg-[#efefef] p-0 text-center align-bottom text-[11px] leading-[15px] font-normal text-[#444]">
                        {i + 1}
                    </th>
                </tr>
            ))}
        </tbody>
    </table>
);

const Workspace = () => (
    <main className="flex min-h-0 flex-1">
        <div className="ml-[2px] flex w-[18px] shrink-0 flex-col items-center rounded-lg bg-[#f5f5f5] pt-[7px] pb-[2px]">
            <svg width="9" height="7" viewBox="0 0 9 7" className="shrink-0"><path d="M4.500 0 9 7H0Z" fill="#666" /></svg>
            <div className="mt-[5px] h-[59px] w-[9px] shrink-0 rounded-full bg-[#6e6e6e]" />
            <svg width="9" height="7" viewBox="0 0 9 7" className="mt-auto shrink-0"><path d="M4.500 7 9 0H0Z" fill="#666" /></svg>
        </div>
        <div className="ml-px flex min-w-0 flex-1 justify-end overflow-hidden border-l border-[#d4d4d4]">
            <Sheet />
        </div>
    </main>
);

const SheetTabs = () => (
    <div className="flex h-8 shrink-0 items-center border-t border-b border-t-[#d4d4d4] border-b-white">
        <div className="ml-5 flex h-[17px] w-[508px] items-center rounded-full bg-[#f5f5f5] px-1">
            <svg width="7" height="9" viewBox="0 0 7 9"><path d="M7 0v9L0 4.500Z" fill="#666" /></svg>
            <div className="ml-[89px] h-[9px] w-[391px] rounded-full bg-[#6e6e6e]" />
            <svg width="7" height="9" viewBox="0 0 7 9" className="ml-[5px]"><path d="M0 0v9l7-4.500Z" fill="#666" /></svg>
        </div>
        <svg width="3" height="12" viewBox="0 0 3 12" className="ml-[14px]" fill="#333"><path d="M.5 1h2v2h-2ZM.5 5h2v2h-2ZM.5 9h2v2h-2Z" /></svg>
        <div className="ml-auto flex h-full items-center font-['Open_Sans','DejaVu_Sans',sans-serif]">
            <button type="button" aria-label="New sheet" className="mr-[43px]">
                <svg width="11" height="11" viewBox="0 0 11 11" stroke="#333"><path d="M0 5.500h11M5.500 0v11" /></svg>
            </button>
            <button type="button" dir="rtl" className="h-[18px] w-[102px] border-x border-[#cfcfcf] text-[14px] leading-[18px] whitespace-nowrap">حصر تجميعى</button>
            <button type="button" dir="rtl" className="-mt-px ml-[3px] flex w-14 flex-col self-start rounded-b-[5px] bg-white px-2 pb-[3px] text-[12px] font-bold whitespace-nowrap shadow-[0_1px_1px_#ccc]">
                <span className="flex w-full justify-center border-b-2 border-[#107c41] leading-[23px]">سقف أ</span>
            </button>
            <button type="button" aria-label="Previous sheets" className="ml-[49px]">
                <svg width="6" height="10" viewBox="0 0 6 10" fill="none" stroke="#999" strokeWidth="1.2"><path d="M5.500.5 1 5l4.500 4.500" /></svg>
            </button>
            <button type="button" aria-label="Next sheets" className="mr-[29px] ml-[27px]">
                <svg width="6" height="10" viewBox="0 0 6 10" fill="none" stroke="#999" strokeWidth="1.2"><path d="M.5.500 5 5 .5 9.500" /></svg>
            </button>
        </div>
    </div>
);

const StatusBar = () => (
    <footer className="flex h-[22px] shrink-0 items-center bg-[#f4f4f4] pl-[11px] text-[11px]">
        <span>Ready</span>
        <button type="button" className="ml-5 flex items-center gap-[3px] font-['Open_Sans'] font-semibold">
            <svg width="15" height="14" viewBox="0 0 15 14" fill="none" stroke="#333">
                <circle cx="6" cy="2" r="1.5" />
                <path d="M4.500 3 1 2c-1 1 0 2 3 3v3l-2 4.500c1 1 2 .5 3.500-3M7.500 3 11 2c1 1 0 2-3 3v2M8 8l6 5.500M14 8l-6 5.500" />
            </svg>
            Accessibility: Investigate
        </button>
        <div className="ml-auto flex h-full items-center pr-2">
            <button type="button" aria-label="Normal view" className="flex w-10 justify-center">
                <svg width="13" height="13" viewBox="0 0 13 13" fill="none" stroke="#333"><path d="M.5.5h12v12H.5ZM.5 4.500h12M.5 8.500h12M4.500.5v12M8.500.5v12" /></svg>
            </button>
            <button type="button" aria-label="Page layout view" className="flex w-10 justify-center">
                <svg width="14" height="13" viewBox="0 0 14 13" fill="none" stroke="#333"><path d="M.5.5h13v12H.5ZM3.500 2.500h7v8h-7ZM5 4.500h4M5 6.500h4M5 8.500h4" /></svg>
            </button>
            <button type="button" aria-label="Page break preview" className="flex h-full w-10 items-center justify-center bg-[#dedede]">
                <svg width="14" height="13" viewBox="0 0 14 13" fill="none" stroke="#333"><path d="M.5.5h13v12H.5ZM.5 7.500h9M4.500.5v7M9.500.5v7" /></svg>
            </button>
            <button type="button" aria-label="Zoom out" className="ml-[6px]">
                <svg width="8" height="9" viewBox="0 0 8 9" stroke="#333"><path d="M0 4.500h8" /></svg>
            </button>
            <div className="relative ml-[5px] flex h-full w-[100px] items-center">
                <span className="absolute left-1/2 h-[5px] w-px bg-[#777]" />
                <input
                    type="range"
                    aria-label="Zoom"
                    defaultValue={39}
                    className="relative h-px w-full appearance-none bg-[#777] [&::-webkit-slider-thumb]:h-[11px] [&::-webkit-slider-thumb]:w-[5px] [&::-webkit-slider-thumb]:appearance-none [&::-webkit-slider-thumb]:bg-[#666]"
                />
            </div>
            <button type="button" aria-label="Zoom in" className="ml-[5px]">
                <svg width="9" height="9" viewBox="0 0 9 9" stroke="#333"><path d="M0 4.500h9M4.500 0v9" /></svg>
            </button>
            <span className="ml-3">80%</span>
        </div>
    </footer>
);

const TaskItem = ({ label, running, children }: { label: string; running?: boolean; children: React.ReactNode }) => (
    <button type="button" aria-label={label} className="flex h-10 w-[49px] shrink-0 flex-col items-center">
        <span className="flex h-[38px] items-center pt-[2px]">{children}</span>
        {running && <span className="h-[2px] w-10 bg-[#76dbe0]" />}
    </button>
);

const Taskbar = () => (
    <div className="flex h-10 shrink-0 items-center bg-[linear-gradient(to_right,#1c1c1c,#26261b_30%,#26261b_70%,#1c1c1c_85%)] text-white">
        <button type="button" aria-label="Start" className="flex h-full w-12 shrink-0 items-center justify-center">
            <svg width="16" height="16" viewBox="0 0 16 16" fill="#fff"><path d="m0 2.300 6.800-1v6.300H0ZM7.600 1.200 16 0v7.600H7.600ZM0 8.400h6.800v6.300l-6.800-1ZM7.600 8.400H16V16l-8.400-1.200Z" /></svg>
        </button>
        <label className="flex h-full w-[344px] shrink-0 items-center gap-[10px] border border-[#bbb] bg-[#f1f1f1] pr-[9px] pl-3 text-[#222]">
            <svg width="17" height="17" viewBox="0 0 17 17" fill="none" stroke="#222" strokeWidth="1.3" className="shrink-0">
                <circle cx="10.5" cy="6" r="5.3" />
                <path d="m6.500 10-6 6.500" />
            </svg>
            <input type="text" aria-label="Type here to search" placeholder="Type here to search" className="min-w-0 flex-1 bg-transparent text-[14px] outline-none placeholder:text-[#333]" />
            <svg width="61" height="26" viewBox="0 0 61 26" className="shrink-0">
                <path d="M24 1c2 0 2.500 6 4.500 8S36 11.500 36 13.500s-5.500 2.500-7.500 4.500S26 25 24 25s-2.500-5-4.500-7-7.500-2.500-7.500-4.500 5.500-2.500 7.500-4.500S22 1 24 1Z" fill="#fbc02a" />
                <path d="M46 11c1 0 1.300 3 2.300 4s3.700 1 3.700 2-2.700 1.300-3.700 2.300S47 23 46 23s-1.300-2.700-2.300-3.700S40 18 40 17s2.700-1 3.700-2S45 11 46 11Z" fill="#fdc93b" />
                <path d="m4 17 2 2.500 3.500-.5-1.500 3 1 3.500-3.500-1L2 26v-3.500L0 20l3.500-.5Z" fill="#29a9f3" />
                <circle cx="40" cy="3.5" r="2" fill="#e56b1a" />
                <circle cx="58" cy="23.5" r="2" fill="#7cb928" />
            </svg>
        </label>
        <TaskItem label="Task view">
            <svg width="17" height="16" viewBox="0 0 17 16" fill="none" stroke="#fff"><path d="M.5 0v2.500h11V0M.5 5.500h11v6H.5ZM.5 16v-2.500h11V16M15.500 0v3M15.500 8v8" /><path d="M14 4h3v3h-3Z" fill="#fff" stroke="none" /></svg>
        </TaskItem>
        <TaskItem label="Copilot">
            <svg width="23" height="22" viewBox="0 0 23 22">
                <path d="M7 1h7c2 0 2.500 1.500 3 3l.5 2h-4c-2 0-2.500 1-3 3l-1.500 5c-.7 2-1.500 2.500-3 2.500H3.500C1 16.500.3 14.500 1 12l2.500-8C4.200 2 5 1 7 1Z" fill="#1a8fd8" />
                <path d="m1.500 9 6.500 1-1 4c-.5 2-1.300 2.500-3 2.500C1 16.500.3 14.500 1 12Z" fill="#c5d52f" />
                <path d="M16 21H9c-2 0-2.500-1.500-3-3l-.5-1.500h4c2 0 2.500-1.500 3-3L14 8.500C14.700 6.500 15.500 6 17 6h2.500c2.500 0 3.200 2 2.500 4.500L19.500 18c-.7 2-1.500 3-3.500 3Z" fill="#ee5d78" />
                <path d="M14 8.500C14.700 6.500 15.500 6 17 6h2.500c2.500 0 3.200 2 2.500 4.500l-1 3-8-1Z" fill="#b45bd6" />
                <path d="M5.500 16.500h4l3-3 2 7.500H9c-2 0-3-2.500-3.500-4.500Z" fill="#fb9a58" />
            </svg>
        </TaskItem>
        <TaskItem label="Edge">
            <svg width="24" height="24" viewBox="0 0 24 24">
                <circle cx="12" cy="12" r="12" fill="#1577cf" />
                <path d="M1 9C3 3 7 0 12 0c7 0 12 5 12 10.500 0 3.500-2.500 5.500-5.500 5.500-2.500 0-4-1-3.500-2 1.500-3-1-6-4.500-6C6 8 2.500 10 1 14Z" fill="#31b8d4" />
                <path d="M12 0c7 0 12 5 12 10.500 0 3.500-2.500 5.500-5.500 5.500-2.500 0-4-1-3.500-2C18 8 12 4 8 1Z" fill="#5bd58a" />
                <path d="M9 11c-3 5 0 11 7 11 2 0 4-1 5-2-4 1-9-1-9.500-5.500Z" fill="#0b4f94" />
                <path d="M12 11c-1 3.500 1.500 7 6 7 2 0 3.500-.5 4.500-1.200l.5.700c-.7 1.500-1.500 2.500-3 3-4 .5-10-3-8-9.500Z" fill="#26261b" />
            </svg>
        </TaskItem>
        <TaskItem label="File Explorer" running>
            <svg width="22" height="19" viewBox="0 0 22 19">
                <path d="M0 1.500h8l2 2h12V18H0Z" fill="#e3a21a" />
                <path d="M0 4h22v14H0Z" fill="#ffd45e" />
                <path d="M4 11h14v7.500h-4V14H8v4.500H4Z" fill="#3b8ede" />
            </svg>
        </TaskItem>
        <TaskItem label="Store">
            <svg width="24" height="24" viewBox="0 0 24 24">
                <path d="M7 5V2h10v3" fill="none" stroke="#35a3ea" strokeWidth="2" />
                <path d="M0 5h24v16a3 3 0 0 1-3 3H3a3 3 0 0 1-3-3Z" fill="#f1f1f1" />
                <path d="M7 10h4.500v4.500H7Z" fill="#f25022" /><path d="M12.500 10H17v4.500h-4.500Z" fill="#7fba00" />
                <path d="M7 15.500h4.500V20H7Z" fill="#00a4ef" /><path d="M12.500 15.500H17V20h-4.500Z" fill="#ffb900" />
            </svg>
        </TaskItem>
        <TaskItem label="Outlook">
            <svg width="24" height="24" viewBox="0 0 24 24">
                <path d="M3 8 13 1l10 7v12a3 3 0 0 1-3 3H6a3 3 0 0 1-3-3Z" fill="#2a9be6" />
                <path d="m5 7 8-5 8 5-8 7Z" fill="#7fc4f5" /><path d="m10 12 13-4-2 6Z" fill="#2438a8" />
                <path d="M10 14 23 8v12a3 3 0 0 1-3 3H6Z" fill="#35b4f5" />
                <rect x="0" y="11" width="11" height="11" rx="2" fill="#1060b8" />
                <circle cx="5.5" cy="16.5" r="2.7" fill="none" stroke="#fff" strokeWidth="1.6" />
            </svg>
        </TaskItem>
        <TaskItem label="Teams" running>
            <svg width="26" height="25" viewBox="0 0 26 25">
                <circle cx="13" cy="4" r="4" fill="#5b63c9" /><circle cx="21" cy="5" r="3" fill="#4e56b8" />
                <path d="M8 9h11v8a6 6 0 0 1-11 2Z" fill="#7b83eb" /><path d="M18 9h7v7a4 4 0 0 1-7 2Z" fill="#5059c9" />
                <rect y="6" width="12" height="12" rx="1" fill="#4b53bc" />
                <path d="M3 9.500h6M6 9.500V15" stroke="#fff" strokeWidth="1.6" />
                <path d="m20 14 6 10.500H14Z" fill="#ffc93c" stroke="#b9892a" strokeWidth=".5" /><path d="M20 17v4M20 22v1.500" stroke="#222" strokeWidth="1.4" />
            </svg>
        </TaskItem>
        <TaskItem label="Chrome" running>
            <svg width="24" height="24" viewBox="0 0 24 24">
                <circle cx="12" cy="12" r="12" fill="#fbc116" />
                <path d="M1.600 6A12 12 0 0 1 22.400 6H12L7 15Z" fill="#e33b2e" />
                <path d="M1.600 6A12 12 0 0 0 11.500 24l5.500-9-10 0Z" fill="#269f42" />
                <circle cx="12" cy="12" r="6" fill="#fff" /><circle cx="12" cy="12" r="4.8" fill="#3b86ea" />
            </svg>
        </TaskItem>
        <TaskItem label="Excel" running><ExcelIcon size={23} /></TaskItem>
        <div className="ml-auto flex h-full shrink-0 items-center">
            <svg width="23" height="23" viewBox="0 0 23 23">
                <path d="M1 2C4 0 16 .500 18 1.500V5l4 1v5l-3 2c-1 3-15 3-18 2V9l2-2-2-2Z" fill="#f39a1d" />
                <path d="M1 5.500c5 1.500 12 1.500 18-.5M3 9.500c5 1.500 12 1 18-.5" stroke="#c96d08" fill="none" />
                <path d="m6.500 17.500 4.500 2 4.500-2v2L11 23l-4.500-3.500Z" fill="#dc4d1c" />
            </svg>
            <span className="ml-[10px] text-[14px]">CNY/USD</span>
            <span className="ml-[10px] text-[14px] text-[#f16a5e]">٪0,36-</span>
            <svg width="13" height="8" viewBox="0 0 13 8" fill="none" stroke="#fff" strokeWidth="1.3" className="ml-6"><path d="M.8 7 6.500 1.200 12.200 7" /></svg>
            <svg width="16" height="16" viewBox="0 0 16 16" className="ml-[10px]" fill="none">
                <path d="M0 0h16v16H0Z" fill="#444" />
                <path d="M1 5c3-3 5-1 6-3l6 1v3M4 7v6h3M1 9l2-3 4 1 6 2v4l-4-2-3 3" stroke="#86b80e" strokeWidth="1.4" />
            </svg>
            <svg width="12" height="16" viewBox="0 0 12 16" fill="none" stroke="#fff" className="ml-[11px]">
                <path d="M2 1.500c2-1 5-1 7 0M2 14.500c2 1 5 1 7 0M1.500 4.500h7v7h-7ZM8.500 7l3-2v6l-3-2" />
            </svg>
            <svg width="16" height="12" viewBox="0 0 16 12" fill="none" stroke="#ddd" className="ml-[10px]">
                <path d="M1.500 0v3M4.500 0v3M.5 3h5v2a2.500 2.500 0 0 1-5 0ZM3 7.500V12M6 2.500h8.500v7H5.500M15.500 5v2M8 4l4 4M12 4 8 8" />
            </svg>
            <svg width="17" height="15" viewBox="0 0 17 15" fill="none" stroke="#fff" className="ml-2">
                <path d="M5 2.500h11.500v8H5M3 6.500v7M.5 1.500h5v5h-5ZM11 10.500v3M3 13.500h12" />
            </svg>
            <svg width="17" height="14" viewBox="0 0 17 14" fill="none" stroke="#fff" className="ml-2">
                <path d="M.5 5H3l3.500-3.500v11L3 9H.5ZM9 5c1 1.300 1 2.700 0 4M11.500 3c2 2.500 2 5.500 0 8" /><path stroke="#777" d="M14 1.500c3 3.500 3 7.500 0 11" />
            </svg>
            <span lang="ar" className="ml-4 w-[10px] text-center font-['DejaVu_Sans'] text-[12px]">ع</span>
            <span className="ml-[20px] flex w-[54px] flex-col items-center text-[12px] leading-[18px] whitespace-nowrap">
                <span>2:25 PM</span>
                <span>4/2/2026</span>
            </span>
            <svg width="16" height="16" viewBox="0 0 16 16" className="ml-4" fill="#fff">
                <path d="M0 0h16v12h-5l-3 4v-4H0Z" /><path d="M3 3.500h10M3 6.500h10M3 9h6" stroke="#222" />
            </svg>
            <span className="mr-1 ml-5 h-full w-px bg-[#666]" />
        </div>
    </div>
);

const Watermark = () => (
    <div className="pointer-events-none absolute bottom-0 left-[590px] h-[98px] w-[190px]">
        <svg width="240" height="98" viewBox="0 0 720 294" fill="none" stroke="#c9c9c9" strokeOpacity=".6" className="absolute top-0 left-0">
            <path
                strokeWidth="23"
                strokeLinecap="round"
                strokeLinejoin="round"
                d="M80 84A36 36 0 1 0 117 122V34M108 142H478M231 107A35 35 0 1 0 161 107A35 35 0 1 0 231 107M286 104 281 138M345 104 337 138M374 96 367 138M403 88 395 138M513 118A35 35 0 1 0 443 118A35 35 0 1 0 513 118"
            />
            <g fill="#c9c9c9" fillOpacity=".6" stroke="none">
                <circle cx="180" cy="37" r="15" /><circle cx="214" cy="37" r="15" />
                <circle cx="266" cy="67" r="15" /><circle cx="301" cy="67" r="15" />
            </g>
        </svg>
        <span className="absolute top-[53px] left-[10px] font-['Liberation_Sans'] text-[29px] leading-[30px] text-[#aaa]/50">mostaql.com</span>
    </div>
);

export default function App() {
    return (
        <div className="relative flex h-screen flex-col overflow-hidden bg-[#efefef] font-['Noto_Sans','DejaVu_Sans',sans-serif] text-[#262626]">
            <TitleBar />
            <RibbonTabs />
            <Ribbon />
            <FormulaBar />
            <Workspace />
            <SheetTabs />
            <StatusBar />
            <Taskbar />
            <Watermark />
        </div>
    );
}
